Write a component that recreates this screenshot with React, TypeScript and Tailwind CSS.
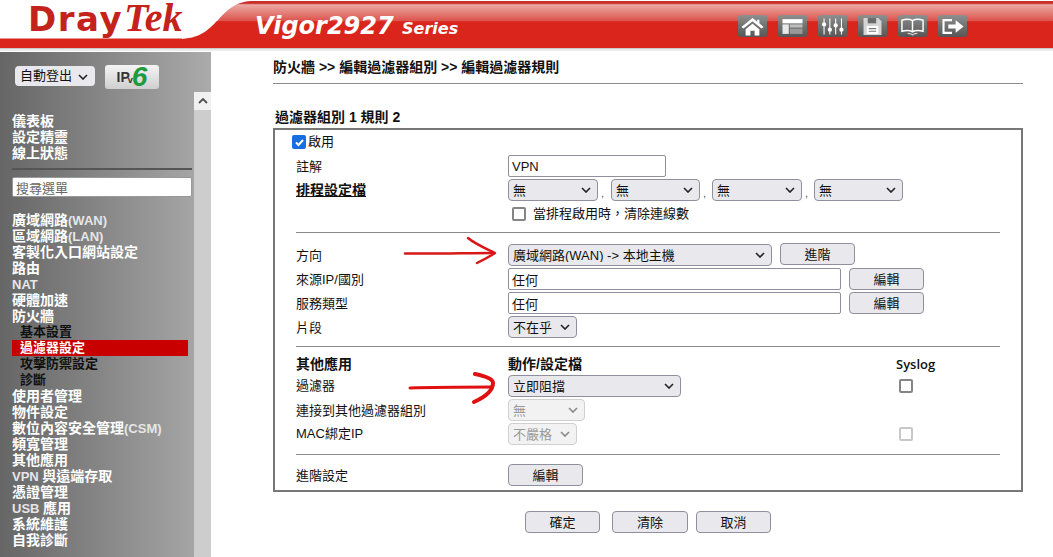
import React from "react";

const font = { fontFamily: '"Liberation Sans","Noto Sans CJK TC",sans-serif' };

function Chevron({ c = "#222" }: { c?: string }) {
  return (
    <svg width="10" height="6" viewBox="0 0 10 6" className="absolute right-[7px] top-[8px] pointer-events-none">
      <path d="M1 1l4 4 4-4" fill="none" stroke={c} strokeWidth="1.6" />
    </svg>
  );
}

function Sel({ w, text, disabled }: { w: string; text: string; disabled?: boolean }) {
  return (
    <span className={`relative block h-[22px] shrink-0 ${w}`}>
      <select
        disabled={disabled}
        defaultValue={text}
        className={`block appearance-none w-full h-full rounded-[4px] border pl-[4px] text-[13px] leading-none outline-none ${
          disabled ? "bg-[#f2f2f3] border-[#d0d0d0] text-[#999]" : "bg-[#e9e9ed] border-[#8f8f9d] text-[#111]"
        }`}
      >
        <option>{text}</option>
      </select>
      <Chevron c={disabled ? "#888" : "#222"} />
    </span>
  );
}

function Btn({ label, cls = "w-[75px]" }: { label: string; cls?: string }) {
  return (
    <button className={`${cls} h-[22px] shrink-0 rounded-[4px] border border-[#8f8f9d] bg-[#e9e9ed] text-[13px] leading-none text-[#111]`}>
      {label}
    </button>
  );
}

function Text({ w, v }: { w: string; v: string }) {
  return (
    <input
      readOnly
      value={v}
      className={`block h-[22px] shrink-0 ${w} rounded-[2px] border border-[#8f8f9d] bg-white px-[3px] text-[13px] leading-none text-[#111] outline-none`}
    />
  );
}

function Box({ disabled }: { disabled?: boolean }) {
  return (
    <span
      className={`block w-[14px] h-[14px] shrink-0 rounded-[2px] border-2 bg-white ${
        disabled ? "border-[#c8c8c8]" : "border-[#858585]"
      }`}
    />
  );
}

function Row({
  label,
  bold,
  children,
}: {
  label?: React.ReactNode;
  bold?: boolean;
  children?: React.ReactNode;
}) {
  return (
    <div className="grid grid-cols-[212px_1fr] items-center h-[24px]">
      <div className={`leading-none text-[#111] ${bold ? "font-bold text-[14px]" : "text-[13px]"}`}>{label}</div>
      <div className="flex items-center">{children}</div>
    </div>
  );
}

function Hr({ cls }: { cls: string }) {
  return <div className={`h-px bg-[#8a8a8a] ${cls}`} />;
}

function Side({ t, sub, active }: { t: string; sub?: boolean; active?: boolean }) {
  const parts = t.split(/([\x20-\x7e]+)/).filter(Boolean);
  return (
    <div
      className={`h-[16px] leading-[16px] font-bold whitespace-nowrap ${
        sub ? "pl-[8px] text-[13px]" : "text-[14px]"
      } ${active ? "bg-[#c80000] text-white w-[176px]" : sub ? "text-[#111]" : "text-white"}`}
    >
      {parts.map((p, i) =>
        /^[\x20-\x7e]+$/.test(p) ? (
          <span key={i} className="text-[13px] text-[#e6e6e6]">
            {p}
          </span>
        ) : (
          <span key={i}>{p}</span>
        )
      )}
    </div>
  );
}

function IconTile({ children }: { children: React.ReactNode }) {
  return (
    <div className="w-[29px] h-[22px] rounded-[3px] bg-gradient-to-b from-[#8f8f8f] to-[#565656] flex items-center justify-center">
      <svg width="25" height="19" viewBox="0 0 23 18">{children}</svg>
    </div>
  );
}

function Header() {
  return (
    <header className="relative h-[52px] bg-white overflow-hidden">
      <svg className="absolute inset-0" width="1053" height="52" viewBox="0 0 1053 52">
        <defs>
          <linearGradient id="top" x1="0" y1="0" x2="0" y2="1">
            <stop offset="0" stopColor="#c9302b" />
            <stop offset="0.05" stopColor="#c9302b" />
            <stop offset="0.08" stopColor="#eca8a3" />
            <stop offset="0.42" stopColor="#dc544d" />
            <stop offset="0.44" stopColor="#d9251c" />
            <stop offset="1" stopColor="#d9251c" />
          </linearGradient>
        </defs>
        <path d="M0 39H178C200 39 208 30 218 20C228 9 236 1 254 1H1053V48H0Z" fill="url(#top)" />
        <path d="M0 38.500H182V48H0Z" fill="#d9251c" />
        <path d="M0 48H1053V49H0Z" fill="#c9c9c9" />
        <path d="M0 49H1053V51H0Z" fill="#ececec" />
      </svg>
      <div className="relative flex h-full items-start">
        <div className="w-[255px] pl-[28px] flex items-baseline text-[#c4231c] leading-[36px] whitespace-nowrap">
          <span className="text-[34px] font-bold tracking-[1.5px]" style={{ fontFamily: '"DejaVu Sans",sans-serif' }}>
            Dray
          </span>
          <span className="text-[40px] font-bold italic ml-[1px]" style={{ fontFamily: '"Liberation Serif",serif' }}>
            Tek
          </span>
        </div>
        <div
          className="mt-[12px] text-white font-bold italic text-[24px] leading-[28px] whitespace-nowrap"
          style={{ fontFamily: '"DejaVu Sans",sans-serif' }}
        >
          Vigor2927 <span className="text-[16px]">Series</span>
        </div>
        <div className="ml-auto mr-[86px] mt-[15px] flex gap-[11px]">
          <IconTile>
            <path d="M11.500 1L1 9.500 3 11 11.500 4 20 11 22 9.500 18 6V2.500H16V4.500Z" fill="#fff" />
            <path d="M5 11.500L11.500 6.500 18 11.500V17.500H13.500V13H9.500V17.500H5Z" fill="#fff" />
          </IconTile>
          <IconTile>
            <path d="M2 2h19v4H2Z" fill="#fff" />
            <path d="M2 7h6v9H2Z" fill="#e8e8e8" />
            <path d="M9 7h12v3H9Z" fill="#bdbdbd" />
            <path d="M9 11h12v5H9Z" fill="#999" />
          </IconTile>
          <IconTile>
            <path d="M3.500 1.500v15M9 1.500v15M14.500 1.500v15M20 1.500v15" stroke="#fff" strokeWidth="1" />
            <g fill="#fff">
              <circle cx="3.500" cy="7" r="2" />
              <circle cx="9" cy="12" r="2" />
              <circle cx="14.500" cy="8" r="2" />
              <circle cx="20" cy="12" r="2" />
            </g>
          </IconTile>
          <IconTile>
            <path d="M3 1h14l3 3v13H3Z" fill="#d4d4d4" />
            <path d="M7 1h8v5H7Z" fill="#6a6a6a" />
            <path d="M6 8.500h11v7.500H6Z" fill="#fff" />
            <path d="M8 11h7M8 13.500h7" stroke="#777" strokeWidth="1" />
          </IconTile>
          <IconTile>
            <path
              d="M11.500 3.500C9 2 5 2 1.500 3v10.500c3.500-1 7.500-1 10 .5 2.500-1.500 6.500-1.500 10-.5V3C18 2 14 2 11.500 3.500ZM11.500 3.500v10.500"
              fill="none"
              stroke="#fff"
              strokeWidth="1.400"
            />
            <path d="M7 15.500c2 0 3.500.5 4.500 1.500 1-1 2.500-1.500 4.500-1.500" fill="none" stroke="#ddd" strokeWidth="1" />
          </IconTile>
          <IconTile>
            <path d="M11 3H3v12h8" fill="none" stroke="#fff" strokeWidth="2" />
            <path d="M7.500 7h7V3l7.500 6-7.500 6v-4h-7Z" fill="#fff" />
          </IconTile>
        </div>
      </div>
    </header>
  );
}

function Sidebar() {
  return (
    <aside className="w-[211px] shrink-0 h-[505px] bg-gradient-to-r from-[#666666] to-[#ababab] flex flex-col overflow-hidden">
      <div className="h-[40px] shrink-0 flex items-start pl-[15px] pt-[13px] gap-[10px]">
        <span className="relative block w-[80px] h-[20px] mt-[1px]">
          <select
            defaultValue="自動登出"
            className="block appearance-none w-full h-full rounded-[4px] bg-[#e9e9ed] pl-[5px] text-[13px] text-[#111] outline-none"
          >
            <option>自動登出</option>
          </select>
          <Chevron />
        </span>
        <div className="w-[54px] h-[24px] rounded-[3px] bg-gradient-to-b from-[#f4f4f4] to-[#cfcfcf] flex items-center justify-center leading-none">
          <span className="text-[14px] font-bold text-[#333]">IP</span>
          <span className="text-[9px] font-bold text-[#333] mt-[7px] -ml-[2px]">v</span>
          <span className="text-[28px] font-bold italic text-[#1d9a3c] ml-[-1px] -mt-[1px] leading-[24px]">6</span>
        </div>
      </div>
      <div className="flex flex-1 min-h-0">
        <div className="w-[194px] shrink-0 pl-[12px] pr-[2px] pt-[21px]">
          <Side t="儀表板" />
          <Side t="設定精靈" />
          <Side t="線上狀態" />
          <div className="h-[2px] bg-[#555] mt-[7px] w-[180px]" />
          <input
            readOnly
            value="搜尋選單"
            className="block mt-[7px] w-[180px] h-[20px] bg-white rounded-[2px] border border-[#999] px-[3px] text-[13px] text-[#666] outline-none"
          />
          <div className="mt-[15px]">
            {["廣域網路(WAN)", "區域網路(LAN)", "客製化入口網站設定", "路由", "NAT", "硬體加速", "防火牆"].map((t) => (
              <Side key={t} t={t} />
            ))}
            <Side t="基本設置" sub />
            <Side t="過濾器設定" sub active />
            <Side t="攻擊防禦設定" sub />
            <Side t="診斷" sub />
            {[
              "使用者管理",
              "物件設定",
              "數位內容安全管理(CSM)",
              "頻寬管理",
              "其他應用",
              "VPN 與遠端存取",
              "憑證管理",
              "USB 應用",
              "系統維護",
              "自我診斷",
            ].map((t) => (
              <Side key={t} t={t} />
            ))}
          </div>
        </div>
        <div className="w-[17px] bg-[#cdcdcd]">
          <div className="h-[18px] bg-[#f1f1f1] flex items-center justify-center">
            <svg width="10" height="6" viewBox="0 0 10 6">
              <path d="M1 5l4-4 4 4" fill="none" stroke="#505050" strokeWidth="1.800" />
            </svg>
          </div>
        </div>
      </div>
    </aside>
  );
}

export default function App() {
  return (
    <div className="w-[1053px] h-[557px] bg-white overflow-hidden" style={font}>
      <Header />
      <div className="flex">
        <Sidebar />
        <main className="flex-1 pl-[62px] pr-[30px] pt-[7px]">
          <div className="h-[16px] mb-[8px] flex items-center text-[14px] font-bold text-[#111] whitespace-nowrap">
            防火牆 &gt;&gt; 編輯過濾器組別 &gt;&gt; 編輯過濾器規則
          </div>
          <div className="h-px bg-[#8a8a8a] w-[750px]" />
          <div className="mt-[25px] ml-[2px] h-[17px] flex items-center text-[14px] font-bold text-[#111]">過濾器組別 1 規則 2</div>
          <div className="relative mt-[2px] w-[750px] h-[364px] border-2 border-[#777] px-[21px]">
            <svg className="absolute left-[128px] top-[106px] pointer-events-none" width="100" height="32" viewBox="0 0 100 32">
              <path d="M2 17.500C30 18 65 17 90 17" fill="none" stroke="#d81818" strokeWidth="2.500" strokeLinecap="round" />
              <path d="M65 2C72 8 84 13 92 17 86 21 80 24 74 27" fill="none" stroke="#d81818" strokeWidth="2.500" strokeLinecap="round" strokeLinejoin="round" />
            </svg>
            <svg className="absolute left-[132px] top-[242px] pointer-events-none" width="96" height="34" viewBox="0 0 96 34">
              <path d="M3 16C30 15 60 15 85 15" fill="none" stroke="#e01010" strokeWidth="3" strokeLinecap="round" />
              <path d="M68 2C78 4 86 7 86 11 86 19 78 25 67 30" fill="none" stroke="#e01010" strokeWidth="4" strokeLinecap="round" />
            </svg>

            <div className="flex items-center gap-[1px] h-[24px] -ml-[4px] text-[13px] text-[#111]">
              <span className="w-[14px] h-[14px] rounded-[2px] bg-[#1a6fe0] flex items-center justify-center mr-[1px]">
                <svg width="11" height="11" viewBox="0 0 11 11">
                  <path d="M2 5.500l2.500 2.500L9 3" fill="none" stroke="#fff" strokeWidth="2" />
                </svg>
              </span>
              啟用
            </div>
            <Row label="註解">
              <Text w="w-[158px]" v="VPN" />
            </Row>
            <Row label={<span className="underline">排程設定檔</span>} bold>
              <div className="flex items-end text-[11px] text-[#555]">
                <Sel w="w-[90px]" text="無" />
                <span className="w-[13px] pl-[3px]">,</span>
                <Sel w="w-[89px]" text="無" />
                <span className="w-[12px] pl-[3px]">,</span>
                <Sel w="w-[90px]" text="無" />
                <span className="w-[12px] pl-[3px]">,</span>
                <Sel w="w-[89px]" text="無" />
              </div>
            </Row>
            <Row>
              <div className="flex items-center pl-[4px] gap-[7px] text-[13px] text-[#111]">
                <Box />
                當排程啟用時，清除連線數
              </div>
            </Row>
            <Hr cls="mt-[6px] mb-[10px]" />
            <Row label="方向">
              <Sel w="w-[264px]" text="廣域網路(WAN) -> 本地主機" />
              <Btn label="進階" cls="w-[75px] ml-[8px] -mt-[2px]" />
            </Row>
            <Row label="來源IP/國別">
              <Text w="w-[333px]" v="任何" />
              <Btn label="編輯" cls="w-[75px] ml-[8px]" />
            </Row>
            <Row label="服務類型">
              <Text w="w-[333px]" v="任何" />
              <Btn label="編輯" cls="w-[75px] ml-[8px]" />
            </Row>
            <Row label="片段">
              <Sel w="w-[69px]" text="不在乎" />
            </Row>
            <Hr cls="mt-[7px] mb-[7px]" />
            <div className="grid grid-cols-[212px_388px_1fr] items-center h-[20px] text-[14px] font-bold text-[#111]">
              <span>其他應用</span>
              <span>動作/設定檔</span>
              <span className="text-[13px] font-semibold" style={{ fontFamily: '"Open Sans",sans-serif' }}>
                Syslog
              </span>
            </div>
            <div className="grid grid-cols-[212px_391px_1fr] items-center h-[24px] text-[13px] text-[#111]">
              <span>過濾器</span>
              <Sel w="w-[173px]" text="立即阻擋" />
              <Box />
            </div>
            <Row label="連接到其他過濾器組別">
              <Sel w="w-[77px]" text="無" disabled />
            </Row>
            <div className="grid grid-cols-[212px_391px_1fr] items-center h-[24px] text-[13px] text-[#111]">
              <span>MAC綁定IP</span>
              <Sel w="w-[69px]" text="不嚴格" disabled />
              <Box disabled />
            </div>
            <Hr cls="mt-[8px] mb-[8px]" />
            <Row label="進階設定">
              <Btn label="編輯" />
            </Row>
          </div>
          <div className="mt-[19px] flex pl-[252px]">
            <Btn label="確定" />
            <Btn label="清除" cls="w-[76px] ml-[12px]" />
            <Btn label="取消" cls="w-[75px] ml-[8px]" />
          </div>
        </main>
      </div>
    </div>
  );
}
